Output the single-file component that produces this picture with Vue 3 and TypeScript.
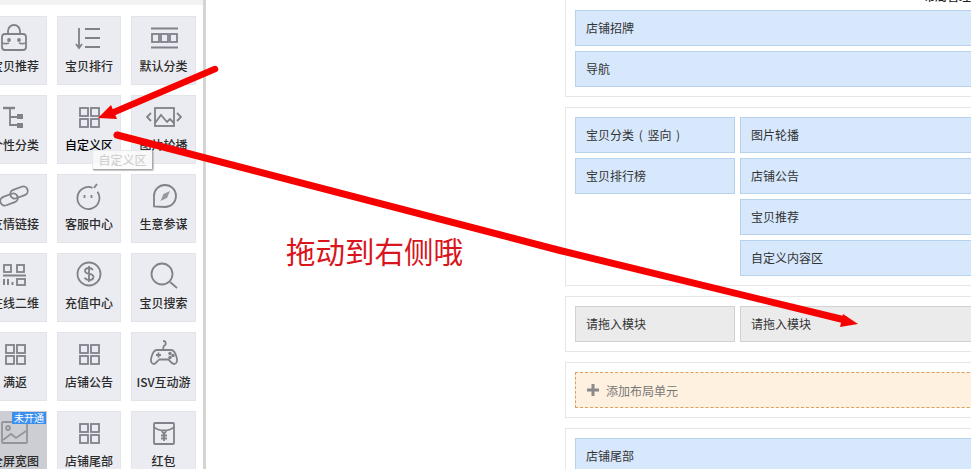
<template>
  <div class="page">
    <aside class="panel">
      <div class="panelTop"></div>
      <div class="tiles">
        <div
          v-for="tile in tiles"
          :key="tile.label"
          class="tile"
          :class="{ active: tile.active, locked: tile.badge }"
        >
          <svg
            class="icon"
            width="36"
            height="28"
            viewBox="0 0 36 28"
            fill="none"
            stroke="currentColor"
            stroke-width="1.8"
            xmlns="http://www.w3.org/2000/svg"
            v-html="icons[tile.icon]"
          ></svg>
          <span class="tileLabel">{{ tile.label }}</span>
          <span v-if="tile.badge" class="badge">{{ tile.badge }}</span>
        </div>
      </div>
      <div class="tooltip">自定义区</div>
    </aside>

    <main class="layout">
      <div class="topText">布局管理</div>
      <section v-for="(sec, i) in sections" :key="i" class="unit" :class="{ first: i === 0 }">
        <div v-if="sec.full" class="stack">
          <div v-for="name in sec.full" :key="name" class="cell">{{ name }}</div>
        </div>
        <div v-else-if="sec.add" class="addCell">
          <svg width="12" height="12" viewBox="0 0 12 12" xmlns="http://www.w3.org/2000/svg">
            <path d="M4.500 0h3v4.500H12v3H7.500V12h-3V7.500H0v-3h4.500z" fill="#8a8a8a" />
          </svg>
          <span>添加布局单元</span>
        </div>
        <div v-else class="columns">
          <div class="side stack">
            <div v-for="name in sec.left" :key="name" class="cell" :class="{ empty: sec.empty }">{{ name }}</div>
          </div>
          <div class="stack grow">
            <div v-for="name in sec.right" :key="name" class="cell" :class="{ empty: sec.empty }">{{ name }}</div>
          </div>
        </div>
      </section>
    </main>

    <div class="note">拖动到右侧哦</div>
    <svg class="arrows" width="971" height="469" viewBox="0 0 971 469" fill="none" xmlns="http://www.w3.org/2000/svg">
      <path d="M215 69 112 113" stroke="#f60000" stroke-width="6.500" stroke-linecap="round" />
      <path d="M98 118 111 105 117 119z" fill="#f60000" />
      <path d="M117 135 560 250.500 845 320" stroke="#f60000" stroke-width="7" stroke-linecap="round" stroke-linejoin="round" />
      <path d="M858 324 843 314 840 327z" fill="#f60000" />
    </svg>
  </div>
</template>

<script setup lang="ts">
interface Tile {
  label: string
  icon: string
  active?: boolean
  badge?: string
}

interface Section {
  full?: string[]
  left?: string[]
  right?: string[]
  empty?: boolean
  add?: boolean
}

const grid =
  '<rect x="9" y="5" width="8" height="8"/><rect x="20" y="5" width="8" height="8"/><rect x="9" y="16" width="8" height="8"/><rect x="20" y="16" width="8" height="8"/>'

const icons: Record<string, string> = {
  grid,
  bag: '<path d="M8 10h18c2 0 3 1 3 3v10c0 2-1 3-3 3H8c-2 0-3-1-3-3V13c0-2 1-3 3-3z"/><path d="M11 10V7a6 6 0 0 1 12 0v3M5 19c3 1 5 1 7 0M22 19c2 1 4 1 7 0"/><circle cx="12" cy="16" r="1" fill="currentColor"/><circle cx="22" cy="16" r="1" fill="currentColor"/>',
  sort: '<path d="M8 4v19M5 20l3 4 3-4M14 5h15M14 14h15M14 23h15"/>',
  list: '<path d="M5 4.500h27M5 23.500h27" stroke-width="2"/><rect x="6" y="10" width="7" height="8"/><rect x="15" y="10" width="7" height="8"/><rect x="24" y="10" width="7" height="8"/>',
  tree: '<path d="M6 5h12" stroke-width="2.400"/><path d="M13 5v17h8M13 14h8"/><rect x="20" y="11" width="6" height="5" fill="currentColor" stroke="none"/><rect x="20" y="20" width="6" height="5" fill="currentColor" stroke="none"/>',
  slide: '<rect x="9" y="5" width="19" height="18"/><path d="M9 20l6-8 6 7 3-3 4 4M5 10l-4 4 4 4M31 10l4 4-4 4"/>',
  link: '<rect x="3" y="13" width="18" height="9" rx="4.500" transform="rotate(-20 12 17.500)"/><rect x="13" y="6" width="18" height="9" rx="4.500" transform="rotate(-20 22 10.500)"/>',
  smile: '<path d="M21.500 5.800a11 11 0 1 0 5 4"/><path d="M23 6l3-4M13.500 13v3M20.500 13v3"/>',
  compass: '<path d="M8 24.500V14a11 11 0 1 1 11 11z"/><path d="M24 9l-3 7-6.500 3 3-7z" fill="currentColor" stroke="none" opacity=".8"/>',
  qr: '<rect x="7" y="4" width="7" height="7"/><rect x="20" y="4" width="7" height="7"/><path d="M6 14.500h23" stroke-width="2"/><path d="M7 18v6M11 18v6M15.500 21v3" stroke-width="2"/><rect x="20" y="18" width="8" height="6"/>',
  dollar: '<circle cx="18" cy="13" r="11.500"/><path d="M22 9c-1-1.300-2.500-2-4-2-2.500 0-4 1.300-4 3 0 4 8.500 2 8.500 5.700 0 2-2 3.300-4.500 3.300-2 0-3.500-.8-4.500-2.200M18 5v16"/>',
  search: '<circle cx="16" cy="13" r="10.500"/><path d="M24 21l7 6"/>',
  game: '<path d="M11 10h14c3 0 5 4 6 9 .5 3-1 5-3 5-2.500 0-4-3-5.500-4.500h-9C11 21 10 24 8 24c-2 0-3.500-2-3-5 1-5 3-9 6-9zM17 1c3 0 4 3 1 5-1 1-1 3 0 4"/><path d="M10 15h5M12.500 12.500v5"/><circle cx="24" cy="13.500" r=".9" fill="currentColor"/><circle cx="27" cy="15.500" r=".9" fill="currentColor"/><circle cx="24" cy="17.500" r=".9" fill="currentColor"/>',
  picture: '<rect x="5" y="3" width="25" height="21" rx="1"/><circle cx="11" cy="9" r="2"/><path d="M6 21l8-6 5 4 10-7"/>',
  redbag: '<rect x="8" y="4" width="20" height="21" rx="1"/><path d="M8 8c4 4.500 16 4.500 20 0M15 11l3 4 3-4M18 15v7M15 16.500h6M15 19.500h6"/>',
}

const tiles: Tile[] = [
  { label: '宝贝推荐', icon: 'bag' },
  { label: '宝贝排行', icon: 'sort' },
  { label: '默认分类', icon: 'list' },
  { label: '个性分类', icon: 'tree' },
  { label: '自定义区', icon: 'grid', active: true },
  { label: '图片轮播', icon: 'slide' },
  { label: '友情链接', icon: 'link' },
  { label: '客服中心', icon: 'smile' },
  { label: '生意参谋', icon: 'compass' },
  { label: '在线二维', icon: 'qr' },
  { label: '充值中心', icon: 'dollar' },
  { label: '宝贝搜索', icon: 'search' },
  { label: '满返', icon: 'grid' },
  { label: '店铺公告', icon: 'grid' },
  { label: 'ISV互动游', icon: 'game' },
  { label: '全屏宽图', icon: 'picture', badge: '未开通' },
  { label: '店铺尾部', icon: 'grid' },
  { label: '红包', icon: 'redbag' },
]

const sections: Section[] = [
  { full: ['店铺招牌', '导航'] },
  {
    left: ['宝贝分类 ( 竖向 )', '宝贝排行榜'],
    right: ['图片轮播', '店铺公告', '宝贝推荐', '自定义内容区'],
  },
  { left: ['请拖入模块'], right: ['请拖入模块'], empty: true },
  { add: true },
  { full: ['店铺尾部'] },
]
</script>

<style scoped>
.page {
  position: relative;
  display: flex;
  width: 971px;
  height: 469px;
  overflow: hidden;
  background: #fff;
  font-family: "Noto Sans CJK SC", "Liberation Sans", sans-serif;
  font-size: 12px;
  color: #333;
}

.panel {
  position: relative;
  flex: none;
  width: 203px;
  border-right: 3px solid #d4d4d4;
  overflow: hidden;
}

.panelTop {
  height: 5px;
  background: #f2f2f2;
}

.tiles {
  display: grid;
  grid-template-columns: 64px 64px 65px;
  grid-auto-rows: 69px;
  gap: 10px;
  margin: 11px 0 0 -17px;
}

.tile {
  position: relative;
  display: flex;
  flex-direction: column;
  align-items: center;
  box-sizing: border-box;
  padding-top: 8px;
  background: #ebecf1;
  border: 1px solid #e3e4e9;
  color: #7f818b;
}

.tile.locked {
  background: #cdced3;
  border-color: #cdced3;
  color: #94959b;
}

.icon {
  flex: none;
  margin-top: -1px;
}

.tileLabel {
  margin-top: 6px;
  line-height: 16px;
  font-weight: 500;
  color: #2b2b2b;
  white-space: nowrap;
}

.tile.active .tileLabel {
  color: #000;
}

.badge {
  position: absolute;
  top: 0;
  right: 0;
  width: 34px;
  height: 12px;
  background: #3d8fef;
  color: #fff;
  font-size: 10px;
  line-height: 12px;
  text-align: center;
}

.tooltip {
  position: absolute;
  left: 92px;
  top: 150px;
  width: 61px;
  height: 20px;
  box-sizing: border-box;
  background: rgba(251, 251, 251, 0.8);
  border: 1px solid #e8e8e8;
  border-right-color: #a8a8a8;
  border-bottom-color: #a8a8a8;
  border-radius: 2px;
  box-shadow: 1px 1px 1px #c4c4c4;
  color: #cbcbcb;
  line-height: 18px;
  text-align: center;
}

.layout {
  position: relative;
  flex: 1;
  display: flex;
  flex-direction: column;
  gap: 10px;
  padding-left: 359px;
  min-width: 0;
}

.topText {
  position: absolute;
  top: -11px;
  right: 0;
  line-height: 13px;
  font-weight: 500;
  color: #222;
}

.unit {
  flex: none;
  box-sizing: border-box;
  width: 500px;
  padding: 9px;
  border: 1px solid #e6e6e6;
}

.unit.first {
  padding-top: 10px;
  border-top: none;
}

.stack {
  display: flex;
  flex-direction: column;
  gap: 5px;
}

.columns {
  display: flex;
  gap: 5px;
}

.side {
  flex: none;
  width: 160px;
}

.grow {
  flex: 1;
}

.cell {
  box-sizing: border-box;
  height: 36px;
  padding-left: 10px;
  background: #d7e8fd;
  border: 1px solid #b6d2ec;
  line-height: 34px;
  word-spacing: 2px;
}

.cell.empty {
  background: #ebebeb;
  border-color: #d2d2d2;
}

.addCell {
  display: flex;
  align-items: center;
  gap: 7px;
  box-sizing: border-box;
  height: 36px;
  padding-left: 11px;
  background: #fff1e0;
  border: 1px dashed #d9a25a;
  color: #777;
}

.note {
  position: absolute;
  left: 286px;
  top: 229px;
  font-size: 29.500px;
  line-height: 42px;
  color: #d8141c;
  white-space: nowrap;
}

.arrows {
  position: absolute;
  left: 0;
  top: 0;
  pointer-events: none;
}
</style>
